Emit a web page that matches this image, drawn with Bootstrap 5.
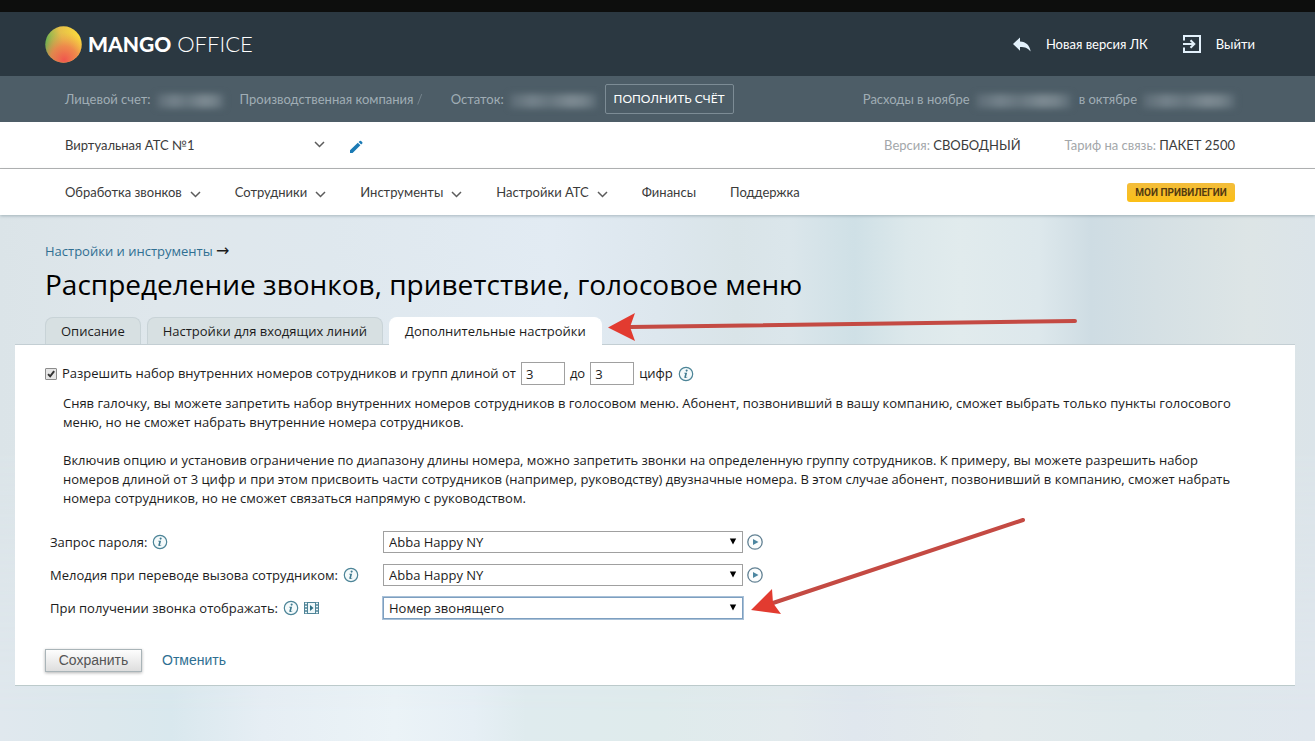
<!DOCTYPE html>
<html lang="ru">
<head>
<meta charset="utf-8">
<meta name="viewport" content="width=device-width, initial-scale=1">
<title>MANGO OFFICE — Распределение звонков</title>
<link rel="stylesheet" href="https://cdn.jsdelivr.net/npm/bootstrap@5.3.0/dist/css/bootstrap.min.css">
<style>
  body {
    font: 13px/19px "Open Sans", "Noto Sans", sans-serif;
    color: #1c1c1c;
    min-height: 100vh;
    background: linear-gradient(90deg, #e0e8ee 0%, #dce8ed 8%, #d9e8ee 13%, #e6eef4 20%, #ebf3f7 30%, #e6eff5 36%, #dfebee 40%, #dfebec 50%, #e2eaed 60%, #e0e7ee 65%, #e3eaec 75%, #dfe9ec 87%, #e0e7ee 100%);
  }
  a { text-decoration: none; color: #2f6f92; }
  svg { flex: none; }

  .top-strip { height: 12px; background: #0d0e0d; }
  .brand-bar { height: 64px; padding: 0 60px 0 45px; background: #2b3841; }
  .brand-bar a { color: #fff; }
  .brand-logo { gap: 6px; }
  .brand-links { gap: 35px; }
  .brand-links a { gap: 15px; }
  .logo-text { font: 300 22px/24px Lato, "Open Sans", sans-serif; }
  .logo-text b { font-size: 21px; font-weight: 900; }

  .inner-x { padding-left: 65px; padding-right: 80px; }
  .site-text { font-family: Lato, "Open Sans", sans-serif; font-size: 13px; line-height: 20px; color: #3b3b3b; }
  .money-bar { height: 46px; background: #4d5d67; color: #a0adb5; }
  .masked { height: 14px; margin: 4px 0 0 6px; filter: blur(3px); background: linear-gradient(90deg, #5b6a74, #74828b 25%, #66757e 45%, #7d8a92 70%, #75838b 85%, #596973); }
  .btn-pay { font-size: 12px; color: #fff; width: 129px; height: 30px; border: 1px solid #7d8c95; border-radius: 2px; padding: 0; }

  .account-row { height: 47px; background: #fff; border-bottom: 1px solid #b5b5b5; }
  .ats-picker { width: 260px; }
  .ats-picker select { appearance: none; border: 0; padding: 0; background: none; color: inherit; font-size: 13px; }
  .ats-picker svg { right: 0; top: 6px; pointer-events: none; }
  .plan-info { gap: 44px; }
  .muted-label { color: #a3a7aa; }

  .main-nav { height: 46px; gap: 34px; background: #fff; box-shadow: 0 1px 3px rgba(60, 90, 100, .35); position: relative; z-index: 1; }
  .main-nav a { color: #3b3b3b; }
  .main-nav a svg { margin: 2px 0 0 8px; }
  .btn-perks { font: 700 10px/19px Roboto, sans-serif; background: linear-gradient(#f3bd3c, #fbbf16); color: #543b10; border: 0; border-radius: 3px; width: 108px; padding: 0; }

  main { position: relative; padding: 26px 20px 55px 15px; }
  main::before {
    content: ""; position: absolute; inset: 0; z-index: -1;
    background: linear-gradient(90deg, #dbe4e8 0%, #dfe7ec 12%, #dfe8ee 25%, #e2ebf3 42%, #dde7ee 50%, #d9e4e8 56%, #dbe6eb 60%, #cfe0e6 65%, #dce8eb 69%, #e1ebed 73%, #dde8ec 79%, #cedce3 83%, #d5e0e4 88%, #dde5e6 95%, #dbe4e9 100%);
    -webkit-mask-image: linear-gradient(#000 45%, transparent 95%);
    mask-image: linear-gradient(#000 45%, transparent 95%);
  }
  .head-x { padding-left: 30px; }
  .crumb-arrow { font: 16px/19px "DejaVu Sans", sans-serif; }
  .page-title { font-size: 28px; line-height: 36px; font-weight: 400; color: #000; margin: 5px 0 15px; }

  .sheet-tabs { gap: 6px; }
  .sheet-tabs .nav-link { color: #1c1c1c; background: #d7e0e2; border: 1px solid #c8d3d7; border-bottom: 0; border-radius: 8px 8px 0 0; padding: 3px 15px; line-height: 20px; }
  .sheet-tabs .nav-link.active { background: #fff; border-color: #fff; margin-bottom: -1px; padding-bottom: 4px; position: relative; }
  .sheet { background: #fff; border-top: 1px solid #c3ced3; border-bottom: 1px solid #bccacb; padding: 17px 30px 13px; }

  .range-row { gap: 5px; }
  .num-input { width: 44px; height: 23px; border: 1px solid #a0a0a0; padding: 0 4px; color: #1c1c1c; }
  .tick.form-check-input { width: 12px; height: 12px; margin: 0; border-radius: 1px; border-color: #8c8c8c; background-color: #e6e6e6; background-image: none; }
  .tick.form-check-input:checked { background-image: url("data:image/svg+xml,%3Csvg xmlns='http://www.w3.org/2000/svg' viewBox='0 0 12 12'%3E%3Cpath d='M2.500 6.200L5 8.800 9.800 2.600' fill='none' stroke='%23333' stroke-width='2.400'/%3E%3C/svg%3E"); }
  .help-text { margin: 9px 0 23px; padding: 0 12px 0 18px; }
  .help-text p { margin-bottom: 19px; }
  .fields { gap: 11px; }
  .field-label { width: 338px; padding-left: 5px; gap: 5px; }
  .field-box { width: 360px; }
  .field-select { width: 100%; height: 22px; border: 1px solid #a0a0a0; background: #fff; appearance: none; padding: 0 5px; color: #1c1c1c; display: block; }
  .field-select.current { border-color: #7d9fc0; box-shadow: 0 0 0 1px #a9c1d8; }
  .field-box .caret { right: 6px; top: 7px; pointer-events: none; }
  .icon-btn { border: 0; padding: 0; background: none; display: flex; }
  .form-actions { gap: 20px; margin-top: 30px; font-family: "Liberation Sans", sans-serif; font-size: 14px; line-height: 21px; }
  .btn-save { color: #555; width: 97px; border: 1px solid #a9b4b8; background: linear-gradient(#fdfdfd, #dedede); box-shadow: 0 1px 3px rgba(0, 0, 0, .3); padding: 0; }
  .pointer { position: absolute; left: 100%; pointer-events: none; }
  .pointer-tab { top: -5px; margin-left: 6px; }
  .pointer-field { top: -80px; margin-left: 8px; }
</style>
</head>
<body>
<svg class="d-none">
  <symbol id="i-down" viewBox="0 0 11 7"><path d="M1 1l4.500 4.500L10 1" fill="none" stroke="#5c5c5c" stroke-width="1.500"/></symbol>
  <symbol id="i-info" viewBox="0 0 16 16"><circle cx="8" cy="8" r="6.700" fill="#f4fafb" stroke="#4c8497" stroke-width="1.200"/><path d="M8.700 3.500a1 1 0 1 1-.1 0zM6.300 6.700h2.800l-1.100 4.200q0 .6 1.200-.1l.2.500c-1.700 1.300-3.500 1-3-.6l.8-3-.9-.3z" fill="#3f7a8f"/></symbol>
  <symbol id="i-play" viewBox="0 0 16 16"><circle cx="8" cy="8" r="7.200" fill="#fbfdfd" stroke="#638294" stroke-width="1.300"/><path d="M6 5l5.500 3L6 11z" fill="#4c86a0"/></symbol>
  <symbol id="i-caret" viewBox="0 0 8 7"><path d="M.8.500h6.400L4 6.500z" fill="#000"/></symbol>
</svg>

<div class="top-strip"></div>
<header>
  <div class="brand-bar d-flex align-items-center justify-content-between">
    <a href="#" class="brand-logo d-flex align-items-center">
      <svg width="37" height="37" viewBox="0 0 37 37">
        <defs>
          <linearGradient id="mg" x1="0" y1=".6" x2="1" y2=".3"><stop offset="0" stop-color="#4fae52"/><stop offset=".25" stop-color="#a3b94e"/><stop offset=".5" stop-color="#e6bf4a"/><stop offset="1" stop-color="#fbdc3c"/></linearGradient>
          <radialGradient id="mr" cx=".52" cy=".92" r=".75"><stop offset="0" stop-color="#f0564e"/><stop offset=".5" stop-color="#f0804c" stop-opacity=".85"/><stop offset="1" stop-color="#f0a04c" stop-opacity="0"/></radialGradient>
        </defs>
        <circle cx="18.500" cy="18.500" r="18.200" fill="url(#mg)"/><circle cx="18.500" cy="18.500" r="18.200" fill="url(#mr)"/>
      </svg>
      <span class="logo-text"><b>MANGO</b> OFFICE</span>
    </a>
    <nav class="brand-links site-text d-flex align-items-center">
      <a href="#" class="d-flex align-items-center">
        <svg width="18" height="15" viewBox="0 0 18 15"><path d="M0 7L7 .5v4c6 .3 9.800 4 10.600 10-2.400-3.200-5.300-4.600-10.600-4.600v3.800z" fill="#e3f1fb"/></svg>Новая версия ЛК
      </a>
      <a href="#" class="d-flex align-items-center">
        <svg width="18" height="18" viewBox="0 0 18 18" fill="none" stroke="#e3f1fb" stroke-width="2"><path d="M1 5.500V1h16v16H1v-4.500M0 9h11M7.500 5.200L11.300 9l-3.800 3.800"/></svg>Выйти
      </a>
    </nav>
  </div>

  <div class="money-bar inner-x site-text d-flex align-items-center">
    <span>Лицевой счет:</span><span class="masked me-3" style="width:67px"></span>
    <span>Производственная компания <span class="opacity-50">/</span></span>
    <span class="ms-4 ps-1">Остаток:</span><span class="masked" style="width:87px"></span>
    <button class="btn-pay bg-transparent ms-2 me-auto" type="button">ПОПОЛНИТЬ СЧЁТ</button>
    <span>Расходы в ноябре</span><span class="masked me-2" style="width:95px"></span>
    <span>в октябре</span><span class="masked" style="width:92px"></span>
  </div>

  <div class="account-row inner-x site-text d-flex align-items-center justify-content-between">
    <div class="d-flex align-items-center">
      <div class="ats-picker position-relative">
        <select class="w-100" aria-label="Виртуальная АТС"><option>Виртуальная АТС №1</option></select>
        <svg class="position-absolute" width="11" height="7"><use href="#i-down"/></svg>
      </div>
      <button class="icon-btn ms-4 mt-1" type="button" aria-label="Изменить">
        <svg width="14" height="14" viewBox="0 0 14 14"><path d="M1 10.200L8.800 2.700l2.600 2.600L3.600 13H1zM9.600 2l1.200-1.100q.7-.5 1.300 0l1.200 1.300q.5.600 0 1.200l-1.200 1.100z" fill="#1b7bb5"/></svg>
      </button>
    </div>
    <div class="plan-info d-flex">
      <span><span class="muted-label">Версия:</span> СВОБОДНЫЙ</span>
      <span><span class="muted-label">Тариф на связь:</span> ПАКЕТ 2500</span>
    </div>
  </div>

  <nav class="main-nav inner-x site-text d-flex align-items-center">
    <a href="#">Обработка звонков<svg width="11" height="7"><use href="#i-down"/></svg></a>
    <a href="#">Сотрудники<svg width="11" height="7"><use href="#i-down"/></svg></a>
    <a href="#">Инструменты<svg width="11" height="7"><use href="#i-down"/></svg></a>
    <a href="#">Настройки АТС<svg width="11" height="7"><use href="#i-down"/></svg></a>
    <a href="#">Финансы</a>
    <a href="#">Поддержка</a>
    <button class="btn-perks ms-auto" type="button">МОИ ПРИВИЛЕГИИ</button>
  </nav>
</header>

<main>
  <div class="head-x">
    <div class="lh-sm-row"><a href="#">Настройки и инструменты</a> <span class="crumb-arrow">→</span></div>
    <h1 class="page-title">Распределение звонков, приветствие, голосовое меню</h1>
    <ul class="nav sheet-tabs">
      <li><a class="nav-link" href="#">Описание</a></li>
      <li><a class="nav-link" href="#">Настройки для входящих линий</a></li>
      <li class="position-relative">
        <a class="nav-link active" href="#" aria-current="page">Дополнительные настройки</a>
        <svg class="pointer pointer-tab" width="470" height="31" viewBox="0 0 470 31">
          <path d="M22 15L467 9" stroke="#c44a43" stroke-width="4" stroke-linecap="round"/>
          <path d="M0 15.500L27 1l-5 14 5 14z" fill="#e23b30"/>
        </svg>
      </li>
    </ul>
  </div>

  <form class="sheet">
    <div class="range-row d-flex align-items-center">
      <input class="form-check-input tick" type="checkbox" id="allow" checked>
      <label for="allow">Разрешить набор внутренних номеров сотрудников и групп длиной от</label>
      <input class="num-input" type="text" id="len-from" value="3" aria-label="Длина от">
      <label for="len-to">до</label>
      <input class="num-input" type="text" id="len-to" value="3">
      <span>цифр</span>
      <svg width="16" height="16"><use href="#i-info"/></svg>
    </div>

    <div class="help-text">
      <p>Сняв галочку, вы можете запретить набор внутренних номеров сотрудников в голосовом меню. Абонент, позвонивший в вашу компанию, сможет выбрать только пункты голосового меню, но не сможет набрать внутренние номера сотрудников.</p>
      <p>Включив опцию и установив ограничение по диапазону длины номера, можно запретить звонки на определенную группу сотрудников. К примеру, вы можете разрешить набор номеров длиной от 3 цифр и при этом присвоить части сотрудников (например, руководству) двузначные номера. В этом случае абонент, позвонивший в компанию, сможет набрать номера сотрудников, но не сможет связаться напрямую с руководством.</p>
    </div>

    <div class="fields d-flex flex-column">
      <div class="d-flex align-items-center">
        <div class="field-label d-flex align-items-center"><label for="pass">Запрос пароля:</label><svg width="16" height="16"><use href="#i-info"/></svg></div>
        <div class="field-box position-relative">
          <select class="field-select" id="pass"><option>Abba Happy NY</option></select>
          <svg class="caret position-absolute" width="8" height="7"><use href="#i-caret"/></svg>
        </div>
        <button class="icon-btn ms-1" type="button" aria-label="Прослушать"><svg width="16" height="16"><use href="#i-play"/></svg></button>
      </div>
      <div class="d-flex align-items-center">
        <div class="field-label d-flex align-items-center"><label for="tune">Мелодия при переводе вызова сотрудником:</label><svg width="16" height="16"><use href="#i-info"/></svg></div>
        <div class="field-box position-relative">
          <select class="field-select" id="tune"><option>Abba Happy NY</option></select>
          <svg class="caret position-absolute" width="8" height="7"><use href="#i-caret"/></svg>
        </div>
        <button class="icon-btn ms-1" type="button" aria-label="Прослушать"><svg width="16" height="16"><use href="#i-play"/></svg></button>
      </div>
      <div class="d-flex align-items-center">
        <div class="field-label d-flex align-items-center"><label for="show">При получении звонка отображать:</label><svg width="16" height="16"><use href="#i-info"/></svg>
          <svg width="15" height="12" viewBox="0 0 15 12"><rect width="15" height="12" fill="#4f8497"/><path d="M4 1h7v10H4z" fill="#eef7f9"/><path d="M1 1.500h2M1 4.500h2M1 7.500h2M1 10.500h2M12 1.500h2M12 4.500h2M12 7.500h2M12 10.500h2" stroke="#eef7f9" stroke-width="1.400"/><path d="M6 3l3.500 3L6 9z" fill="#2f6f85"/></svg>
        </div>
        <div class="field-box position-relative">
          <select class="field-select current" id="show"><option>Номер звонящего</option></select>
          <svg class="caret position-absolute" width="8" height="7"><use href="#i-caret"/></svg>
          <svg class="pointer pointer-field" width="276" height="98" viewBox="0 0 276 98">
            <path d="M22 86L272 3" stroke="#c44a43" stroke-width="4" stroke-linecap="round"/>
            <path d="M0 93L21 72l1 14 8 11z" fill="#e23b30"/>
          </svg>
        </div>
      </div>
    </div>

    <div class="form-actions d-flex align-items-center">
      <button class="btn-save" type="button">Сохранить</button>
      <a href="#">Отменить</a>
    </div>
  </form>
</main>
<script src="https://cdn.jsdelivr.net/npm/bootstrap@5.3.0/dist/js/bootstrap.bundle.min.js"></script>
</body>
</html>
